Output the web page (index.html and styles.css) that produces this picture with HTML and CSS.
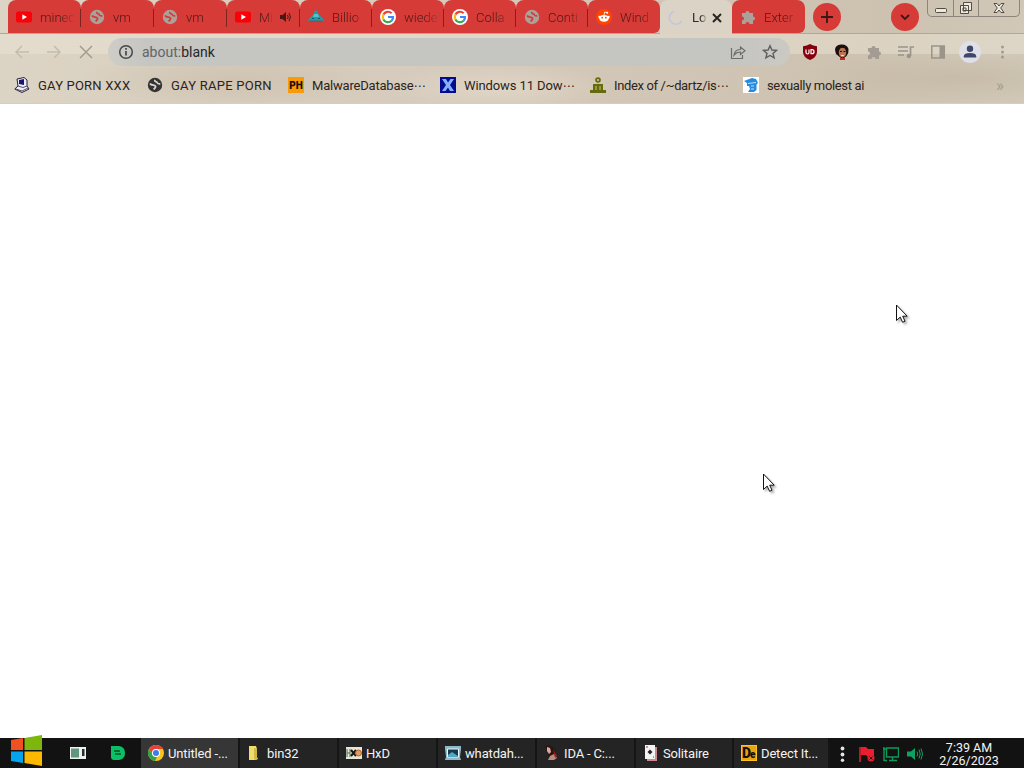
FILE: index.html
```html
<!DOCTYPE html>
<html lang="en">
<head>
    <meta charset="UTF-8">
    <title>about:blank</title>
    <link rel="stylesheet" href="styles.css">
</head>
<body>
    <svg class="defs" width="0" height="0">
        <symbol id="youtube" viewBox="0 0 16 16"><rect y="2.5" width="16" height="11" rx="2.5" fill="#fa0008"/><path d="M6.3 5.3v5.4L11 8z" fill="#fff"/></symbol>
        <symbol id="globe" viewBox="0 0 16 16"><circle cx="8" cy="8" r="7.2" fill="currentColor"/><path class="land" d="M3 6.500C4.500 9 7.500 7.500 8.500 9.200c.6 1.300-1 1.800-1.700 3.300M8 2.800c-1 2 2 1.700 2.500 3.200.5 1.200 1.500 1 2.800.8"/></symbol>
        <symbol id="google" viewBox="0 0 16 16"><circle cx="8" cy="8" r="8" fill="#fff"/><g fill="none" stroke-width="2.2"><path d="M11.600 4.200A5.200 5.200 0 0 0 3.400 5.600" stroke="#ea4335"/><path d="M3.400 5.600a5.200 5.200 0 0 0 0 4.800" stroke="#fbbc05"/><path d="M3.400 10.400a5.200 5.200 0 0 0 8.200 1.400" stroke="#34a853"/><path d="M11.600 11.800A5.200 5.200 0 0 0 13 8H8" stroke="#4285f4"/></g></symbol>
        <symbol id="puzzle" viewBox="0 0 16 16"><path d="M2 4h3.500a2 2 0 1 1 4 0H13v3.500a2 2 0 1 1 0 4V15H9.500a2 2 0 0 0-4 0H2v-3.500a2 2 0 0 0 0-4z" fill="currentColor"/></symbol>
    </svg>

    <div class="browser">
        <div class="tab-strip">
            <div class="tabs">
                <div class="tab"><svg class="icon"><use href="#youtube"/></svg><span>minec</span></div>
                <div class="tab"><svg class="icon gray"><use href="#globe"/></svg><span>vm</span></div>
                <div class="tab"><svg class="icon gray"><use href="#globe"/></svg><span>vm</span></div>
                <div class="tab playing"><svg class="icon"><use href="#youtube"/></svg><span>Mi</span>
                    <svg class="audio" viewBox="0 0 12 12"><path d="M0 4h2.500L6 1v10L2.500 8H0z" fill="#4a1713"/><path d="M7.500 4q1.500 2 0 4M9 2q3 4 0 8" fill="none" stroke="#4a1713"/></svg>
                </div>
                <div class="tab"><svg class="icon" viewBox="0 0 16 16"><path d="M5 6 7 1.500h2L11 6l4 3.500 1 3H0l1-3z" fill="#2698a5"/><path d="M6 5h4l1 3H5z" fill="#53c3c7"/><path d="M1 11.500h14V13H1z" fill="#52646e"/><path d="M4 9.500h2m4 0h2" stroke="#185d6b"/></svg><span>Billio</span></div>
                <div class="tab"><svg class="icon"><use href="#google"/></svg><span>wiede</span></div>
                <div class="tab"><svg class="icon"><use href="#google"/></svg><span>Colla</span></div>
                <div class="tab"><svg class="icon gray"><use href="#globe"/></svg><span>Conti</span></div>
                <div class="tab last"><svg class="icon" viewBox="0 0 16 16"><circle cx="8" cy="8" r="8" fill="#ff4500"/><ellipse cx="8" cy="9.300" rx="4.700" ry="3.400" fill="#fff"/><circle cx="3.500" cy="8" r="1.200" fill="#fff"/><circle cx="12.500" cy="8" r="1.200" fill="#fff"/><path d="m8 6 .7-3 2.300.6" fill="none" stroke="#fff" stroke-width=".8"/><circle cx="11.200" cy="3.700" r="1" fill="#fff"/><circle cx="6.200" cy="8.700" r=".9" fill="#ff4500"/><circle cx="9.800" cy="8.700" r=".9" fill="#ff4500"/></svg><span>Wind</span></div>
                <div class="tab active"><svg class="icon" viewBox="0 0 16 16"><path d="M6 1.500A6.500 6.500 0 1 0 13.500 11" fill="none" stroke="#c5c5dc" stroke-width="1.600"/></svg><span>Lo</span>
                    <svg class="close" viewBox="0 0 10 10"><path d="m1 1 8 8m0-8-8 8" stroke="#29251f" stroke-width="2"/></svg>
                </div>
                <div class="tab last"><svg class="icon gray"><use href="#puzzle"/></svg><span>Exter</span></div>
            </div>
            <div class="round new-tab"><svg viewBox="0 0 12 12"><path d="M6 0v12M0 6h12" stroke="#3b1715" stroke-width="1.800"/></svg></div>
            <div class="round tab-search"><svg viewBox="0 0 12 12"><path d="m2 4 4 4 4-4" fill="none" stroke="#3b1715" stroke-width="1.800"/></svg></div>
            <div class="window-controls">
                <div><svg width="14" height="16"><rect x="1.500" y="8.500" width="11" height="4" rx="1" class="caption"/></svg></div>
                <div><svg width="14" height="16"><path d="M4.500 2.500h8v8h-8zM1.500 5.500h8v8h-8zM4 8h3v3H4z" class="caption"/></svg></div>
                <div><svg width="14" height="16"><path d="M2 3.500h3l2 2.500 2-2.500h3L8.700 8l3.300 4.500H9L7 10l-2 2.500H2L5.300 8z" class="caption"/></svg></div>
            </div>
        </div>

        <div class="toolbar">
            <svg class="nav" viewBox="0 0 16 16"><path d="M15 8H2m6-6L2 8l6 6"/></svg>
            <svg class="nav" viewBox="0 0 16 16"><path d="M1 8h13M8 2l6 6-6 6"/></svg>
            <svg class="nav stop" viewBox="0 0 16 16"><path d="m2 2 12 12m0-12L2 14"/></svg>
            <div class="omnibox">
                <svg class="icon" viewBox="0 0 16 16"><circle cx="8" cy="8" r="6.300" fill="none" stroke="#45474a" stroke-width="1.500"/><path d="M8 7v4.500M8 4v1.700" stroke="#45474a" stroke-width="1.700"/></svg>
                <div class="url"><span>about:</span>blank</div>
                <svg class="icon" viewBox="0 0 16 16"><path d="M1.500 4v10.500h11V11M4 11q1-5.500 6.500-5.500V3L15 6.800l-4.500 3.700V8Q6.500 8 4 11z" fill="none" stroke="#6c6d6d" stroke-width="1.200"/></svg>
                <svg class="icon" viewBox="0 0 16 16"><path d="m8 1.800 1.900 4.200 4.600.4-3.500 3 1.100 4.500L8 11.500l-4.100 2.400L5 9.400l-3.500-3L6.100 6z" fill="none" stroke="#5d5e5f" stroke-width="1.400"/></svg>
            </div>
            <div class="extensions">
                <svg class="icon" viewBox="0 0 16 16"><path d="M8 0q3 2 7 2.200V8q0 5-7 8-7-3-7-8V2.200Q5 2 8 0z" fill="#85000d"/><path d="M4 5.500v3q0 1.500 1.500 1.500T7 8.500v-3M9 5.700v4h1q2 0 2-2t-2-2z" fill="none" stroke="#fff" stroke-width="1.200"/></svg>
                <svg class="icon" viewBox="0 0 16 16"><path d="M1 6Q1 1 7 .5q6-.5 7.500 4.500.5 4-2 7L10 14H7L2 10z" fill="#1b100c"/><ellipse cx="8.500" cy="8.500" rx="3.700" ry="5" fill="#b87354"/><path d="M4.500 7q1-4 4-3 3-1 4 3V3L8 1 4 3z" fill="#1b100c"/><path d="M6.500 10.500q2 1 4 0-2 3-4 0z" fill="#fff"/><path d="M6 7.500h2m1.500 0h2" stroke="#28130e"/><path d="M6 14h5v2H6z" fill="#b52e2b"/></svg>
                <svg class="icon muted"><use href="#puzzle"/></svg>
                <svg class="icon" viewBox="0 0 16 16"><path d="M0 3h10M0 7h10M0 11h6M12.500 12V3H16" fill="none" stroke="#9b948b" stroke-width="1.700"/><circle cx="10.800" cy="12" r="2.200" fill="#9b948b"/></svg>
                <svg class="icon" viewBox="0 0 16 16"><path d="M1.800 2h12.500v12H1.800z" fill="none" stroke="#9b948b" stroke-width="1.500"/><path d="M9.500 2H15v12H9.500z" fill="#9b948b"/></svg>
                <svg class="profile" viewBox="0 0 22 22"><circle cx="11" cy="11" r="11" fill="#dedfe7"/><circle cx="11" cy="7.800" r="3.200" fill="#3d4769"/><path d="M4.800 16.500v-1.200Q5 12 11 12t6.200 3.300v1.200z" fill="#3d4769"/></svg>
                <svg class="icon" viewBox="0 0 16 16"><g fill="#a39b90"><circle cx="8.500" cy="3" r="1.500"/><circle cx="8.500" cy="8" r="1.500"/><circle cx="8.500" cy="13" r="1.500"/></g></svg>
            </div>
        </div>

        <div class="bookmarks">
            <div class="bookmark b1"><svg class="icon" viewBox="0 0 16 16"><path d="m3 2 7-1.500L13 3v6l2 3-7 3.500L.8 12 4 9z" fill="#eeedf5" stroke="#27213d"/><path d="m5 3 5-1v6L5 7z" fill="#171775"/><path d="m2 12 6 2 6-3M4 9l5 1.500L13 9" fill="none" stroke="#555168"/></svg><span>GAY PORN XXX</span></div>
            <div class="bookmark b2"><svg class="icon dark"><use href="#globe"/></svg><span>GAY RAPE PORN</span></div>
            <div class="bookmark b3"><div class="ph">PH</div><span>MalwareDatabase<i>⋯</i></span></div>
            <div class="bookmark b4"><svg class="icon" viewBox="0 0 16 16"><path d="M0 0h16v16H0z" fill="#030b91"/><path d="M2 2h4l2 3.500L10.500 2H14l-4 6 4 6h-4l-2-3.500L5.500 14H2l4-6z" fill="#86afff"/></svg><span>Windows 11 Dow<i>⋯</i></span></div>
            <div class="bookmark b5"><svg class="icon" viewBox="0 0 16 16"><g fill="#666b0c"><path d="M0 13h16v3H0zM3 7h10v6H3z"/><circle cx="8" cy="3" r="2.800"/></g><circle cx="8" cy="3" r="1" fill="#d4cdb9"/><path d="M6 9v4m4-4v4M7 6.500h2" stroke="#c8c188"/></svg><span>Index of /~dartz/is<i>⋯</i></span></div>
            <div class="bookmark b6"><svg class="icon" viewBox="0 0 16 16"><path d="M0 0h16v16H0z" fill="#fff"/><path d="M1 4 5 2.500 9 1l4 1 2 4-1.500 1.500V13L11 15H5l2-3-1-3H4V6z" fill="#238be0"/><path d="m5 6.500 8-1M8 9h3m-3 3h3" stroke="#bfe3fa"/></svg><span>sexually molest ai</span></div>
            <div class="overflow">»</div>
        </div>
    </div>

    <div class="page">
        <svg class="cursor first" viewBox="0 0 14 20"><path d="M1.500 1v15.500l3.700-3.400 2.400 5.200 2.400-1.100-2.300-5h4.500z" fill="#fff" stroke="#111"/></svg>
        <svg class="cursor second" viewBox="0 0 14 20"><path d="M1.500 1v15.500l3.700-3.400 2.400 5.200 2.400-1.100-2.300-5h4.500z" fill="#fff" stroke="#111"/></svg>
    </div>

    <div class="taskbar">
        <svg class="start" viewBox="0 0 33 33"><path d="m1 6 12-2v12H1z" fill="#f05022"/><path d="M14.500 4 32 1v15H14.500z" fill="#7db70d"/><path d="M1 17.500h12V29L1 27z" fill="#05a5ee"/><path d="M14.500 17.500H32V32l-17.500-3z" fill="#fdb900"/></svg>
        <div class="pinned">
            <svg class="icon" viewBox="0 0 16 16"><path d="M0 2h16v12H0z" fill="#eef2ee"/><path d="M1 3.500h8v9H1z" fill="#639681"/><path d="M12 4h2.500v7H12z" fill="#21312c"/></svg>
            <svg class="icon" viewBox="0 0 16 16"><path d="M1 1h8q6 1 6 7t-6 7H4q-3 0-3-3z" fill="#09c064"/><path d="M4 6h6M5 9h6" stroke="#064f2d" stroke-width="1.400"/></svg>
        </div>
        <div class="tasks">
            <div class="task current"><svg class="icon" viewBox="0 0 16 16"><circle cx="8" cy="8" r="8" fill="#f9c51a"/><path d="M1.100 4A8 8 0 0 1 15 4H8L5 10z" fill="#e54335"/><path d="M1.100 4 5 10l4 2-2 4A8 8 0 0 1 1.100 4" fill="#31a350"/><circle cx="8" cy="8" r="4" fill="#fff"/><circle cx="8" cy="8" r="3" fill="#3c7cf0"/></svg><span>Untitled -...</span></div>
            <div class="task"><svg class="icon" viewBox="0 0 16 16"><path d="M2 1h7l1 3v8l1 2-3 1H2z" fill="#efdb6e"/><path d="M7 3v11l3 1V4z" fill="#cdb745"/></svg><span>bin32</span></div>
            <div class="task"><svg class="icon" viewBox="0 0 16 16"><path d="M0 2h16v12H0z" fill="#e6e6d5"/><path d="M1 4v8m3-8v8M1 8h3" stroke="#55695d"/><path d="m5 5 5 6m0-6-5 6" stroke="#161616" stroke-width="2"/><circle cx="12.500" cy="8" r="3" fill="#dfa160" stroke="#b65e2b"/></svg><span>HxD</span></div>
            <div class="task"><svg class="icon" viewBox="0 0 16 16"><path d="M0 1h16v3l-1 8 1 3H0l1-3-1-8z" fill="#8db9c9"/><path d="M2.500 4h11v8h-11z" fill="#17394c" stroke="#eaf7fa"/><path d="m3 10 4-3 6 4v1H3z" fill="#51a7c7"/></svg><span>whatdah...</span></div>
            <div class="task"><svg class="icon" viewBox="0 0 16 16"><path d="M1 1q7-2 10 4l2 6-2 4H6L4 8z" fill="#2b1512"/><path d="m3 2 3 1 1 4-2 2-2-3z" fill="#d9ac9b"/><path d="m6 11 4-2 3 4-3 2H4z" fill="#c18a80"/><path d="m9 4 4 7-2 2z" fill="#9f2020"/></svg><span>IDA - C:...</span></div>
            <div class="task"><svg class="icon" viewBox="0 0 16 16"><path d="M4 2h10v14H4z" fill="#ce8990"/><path d="M2 0h10v14H2z" fill="#f4f4f4"/><path d="m7 4.500 2.500 2.500L7 9.500 4.500 7z" fill="#252525"/><path d="M3 2h2m5 10h1" stroke="#c1222e"/></svg><span>Solitaire</span></div>
            <div class="task"><div class="die">D<small>e</small></div><span>Detect It...</span></div>
        </div>
        <div class="tray">
            <svg class="icon" viewBox="0 0 16 16"><g fill="#e4e4e4"><circle cx="7.500" cy="2.500" r="1.900"/><circle cx="7.500" cy="8.500" r="1.900"/><circle cx="7.500" cy="14.300" r="1.700"/></g></svg>
            <svg class="icon" viewBox="0 0 16 16"><path d="M1 1v15" stroke="#ed1c2e" stroke-width="1.500"/><path d="M2 1h5l2 2h6v8H9L7 9H2z" fill="#ed1c2e"/><circle cx="12" cy="12" r="3.500" fill="#ed1c2e"/><path d="m10.500 10.500 3 3m0-3-3 3" stroke="#111"/></svg>
            <svg class="icon" viewBox="0 0 16 16"><path d="M3.500 2h12v9h-12zM9.500 11v3M6 14.500h8M1 1v14M0 3h3M1 14.500h3" fill="none" stroke="#0d9959" stroke-width="1.400"/></svg>
            <svg class="icon" viewBox="0 0 16 16"><path d="M0 5.500h4l4-3.500v12l-4-3.500H0z" fill="#0da35e"/><path d="M10 5.500q1.500 2.500 0 5m2-7q2.500 4.500 0 9m2-10q3 5.500 0 11" fill="none" stroke="#0da35e"/></svg>
        </div>
        <div class="clock"><div>7:39 AM</div><div>2/26/2023</div></div>
    </div>
</body>
</html>
```
FILE: styles.css
```css
body {
    margin: 0;
    height: 768px;
    display: flex;
    flex-direction: column;
    overflow: hidden;
    background-color: #fff;
    font-family: Roboto, "Noto Sans CJK KR", sans-serif;
    font-size: 13px;
    color: #2c231c;
}
.defs {
    position: absolute;
}
svg {
    display: block;
    flex: none;
}
.icon {
    width: 16px;
    height: 16px;
}
.gray {
    color: #aaa19a;
    --land: #d63b37;
}
.muted {
    color: #a49c92;
}
.dark {
    color: #343434;
    --land: #ddd4c8;
}
.land {
    fill: none;
    stroke: var(--land);
    stroke-width: 1.8;
}
.browser {
    height: 104px;
    box-sizing: border-box;
    border-bottom: 1px solid #d3cecb;
    background:
        radial-gradient(ellipse 150px 30px at 230px 80px, rgba(190, 172, 150, .35), transparent),
        radial-gradient(ellipse 110px 25px at 500px 88px, rgba(232, 222, 205, .6), transparent),
        radial-gradient(ellipse 170px 24px at 960px 78px, rgba(190, 177, 155, .45), transparent),
        linear-gradient(100deg, #dcd4c4 0%, #d5cabb 45%, #cdc2b0 85%, #d1c8b8 100%);
}
.tab-strip {
    height: 34px;
    box-sizing: border-box;
    display: flex;
    align-items: flex-start;
    padding-left: 8px;
    border-bottom: 1px solid #b1a799;
}
.tabs {
    display: grid;
    grid-template-columns: repeat(4, 73px) repeat(6, 72px) 73px;
    padding-right: 1px;
}
.tab {
    height: 33px;
    box-sizing: border-box;
    display: flex;
    align-items: center;
    padding: 1px 0 0 8px;
    gap: 8px;
    border-radius: 8px 8px 0 0;
    background: linear-gradient(#7d2320, #7d2320) right 9px / 1px 18px no-repeat #d63b37;
    color: #4f1815;
}
.tab.last {
    background: #d63b37;
    border-bottom-right-radius: 6px;
}
.tab span {
    width: 33px;
    white-space: nowrap;
    font-weight: 300;
    -webkit-mask-image: linear-gradient(90deg, #000 60%, rgba(0, 0, 0, .2));
    mask-image: linear-gradient(90deg, #000 60%, rgba(0, 0, 0, .2));
}
.tab.playing span {
    width: 13px;
}
.audio {
    width: 12px;
    height: 12px;
}
.tab.active {
    height: 34px;
    background: #dbd3c5;
    color: #302a24;
}
.tab.active span {
    width: 14px;
    font-weight: 400;
}
.close {
    width: 10px;
    height: 10px;
    margin-left: -2px;
}
.round {
    width: 28px;
    height: 28px;
    margin-top: 3px;
    border-radius: 50%;
    background-color: #d63b37;
    display: flex;
    align-items: center;
    justify-content: center;
}
.round svg {
    width: 12px;
    height: 12px;
}
.new-tab {
    margin-left: 7px;
}
.tab-search {
    margin-left: 50px;
}
.window-controls {
    display: grid;
    grid-template-columns: 25px 25px 41px;
    height: 16px;
    margin-left: 8px;
    border: 1px solid #8d857a;
    border-top: 0;
    border-radius: 0 0 5px 5px;
}
.window-controls div {
    display: flex;
    justify-content: center;
}
.window-controls div + div {
    border-left: 1px solid #8d857a;
}
.caption {
    fill: #eee9df;
    stroke: #514b43;
}
.toolbar {
    height: 36px;
    display: flex;
    align-items: center;
    padding-left: 14px;
    background: linear-gradient(rgba(236, 230, 215, .45) 54%, transparent 57%);
}
.nav {
    width: 16px;
    height: 16px;
    margin-right: 16px;
    fill: none;
    stroke: #c4bcae;
    stroke-width: 1.5;
}
.stop {
    stroke: #a49c91;
}
.omnibox {
    width: 682px;
    height: 28px;
    box-sizing: border-box;
    display: flex;
    align-items: center;
    gap: 16px;
    margin-left: -2px;
    padding: 0 12px 0 10px;
    border-radius: 14px;
    background: linear-gradient(90deg, #cecdc7, #c5c5c2 6%, #c5c5c2 92%, #cbc9c2);
}
.url {
    flex: 1;
    margin-left: -8px;
    font-size: 14px;
    color: #272728;
}
.url span {
    color: #626466;
}
.extensions {
    display: flex;
    align-items: center;
    gap: 16px;
    margin-left: 12px;
}
.profile {
    width: 22px;
    height: 22px;
    margin: 0 -3px;
}
.bookmarks {
    height: 33px;
    box-sizing: border-box;
    display: grid;
    grid-template-columns: 133px 141px 152px 150px 153px 253px 20px;
    align-items: center;
    padding: 0 0 3px 14px;
}
.bookmark {
    display: flex;
    align-items: center;
    gap: 8px;
    white-space: nowrap;
}
.bookmark i {
    font-family: "DejaVu Sans", sans-serif;
    font-size: 12px;
    font-style: normal;
    line-height: 1;
    letter-spacing: 0;
}
.b1 {
    letter-spacing: .2px;
}
.b2 {
    letter-spacing: .25px;
}
.b3 {
    letter-spacing: -.2px;
}
.b4 {
    letter-spacing: -.1px;
}
.b5, .b6 {
    letter-spacing: -.35px;
}
.ph {
    width: 16px;
    height: 16px;
    background-color: #f99b07;
    color: #171006;
    font-size: 10px;
    line-height: 17px;
    font-weight: 900;
    letter-spacing: 0;
    text-align: center;
}
.overflow {
    font-size: 17px;
    line-height: 16px;
    color: #a39b90;
}
.page {
    position: relative;
    flex: 1;
}
.cursor {
    position: absolute;
    width: 14px;
    height: 20px;
    filter: drop-shadow(2px 2px 1px rgba(0, 0, 0, .3));
}
.first {
    left: 895px;
    top: 200px;
}
.second {
    left: 762px;
    top: 369px;
}
.taskbar {
    height: 30px;
    display: flex;
    background-color: #121212;
    color: #f4f4f4;
}
.start {
    width: 33px;
    height: 33px;
    margin: -4px 0 0 10px;
    z-index: 1;
}
.pinned {
    display: flex;
    align-items: center;
    gap: 24px;
    width: 71px;
    padding-left: 27px;
}
.tasks {
    display: grid;
    grid-template-columns: repeat(5, 99px) 98px 96px;
}
.task {
    display: flex;
    align-items: center;
    gap: 4px;
    padding-left: 7px;
    box-sizing: border-box;
    background-color: #242424;
    border-right: 2px solid #151515;
    white-space: nowrap;
    letter-spacing: -.15px;
}
.task.current {
    background-color: #363636;
}
.die {
    width: 16px;
    height: 16px;
    box-sizing: border-box;
    border: 1px solid #ffc31f;
    background-color: #e9a413;
    color: #15100a;
    font-size: 14px;
    font-weight: 900;
    line-height: 15px;
    letter-spacing: -1px;
}
.die small {
    font-size: 10px;
}
.tray {
    display: flex;
    align-items: center;
    gap: 8px;
    margin-left: 5px;
    padding-top: 2px;
}
.clock {
    width: 72px;
    margin-left: 10px;
    padding-top: 3px;
    font-size: 12.5px;
    line-height: 13px;
    text-align: center;
}
```
